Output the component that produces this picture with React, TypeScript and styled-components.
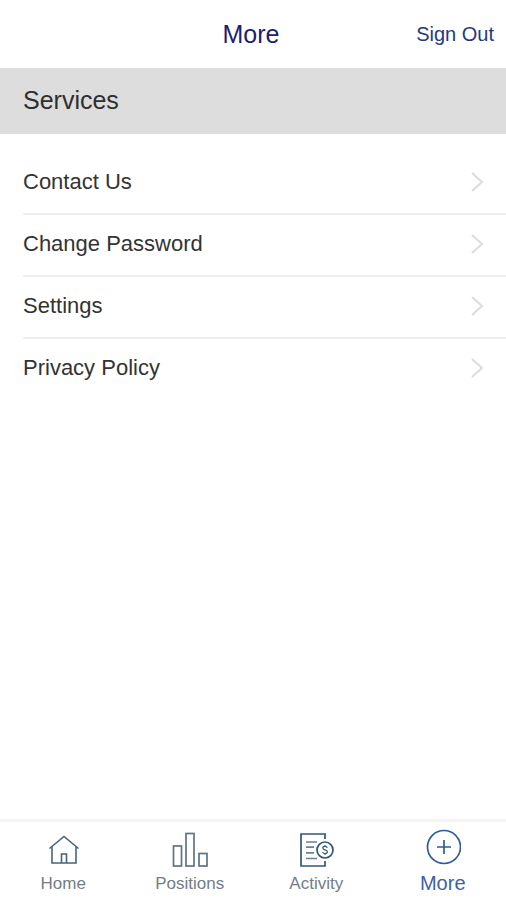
import React from 'react';
import styled, { createGlobalStyle } from 'styled-components';

const GlobalStyle = createGlobalStyle`
  * { box-sizing: border-box; }
  body {
    margin: 0;
    background: #ffffff;
    color: #333333;
    font-family: "Liberation Sans", Arial, sans-serif;
  }
`;

const Screen = styled.div`
  display: flex;
  flex-direction: column;
  min-height: 100vh;
`;

const Header = styled.header`
  display: grid;
  grid-template-columns: 1fr auto 1fr;
  align-items: center;
  height: 68px;
  padding: 0 12px 0 8px;
`;

const Title = styled.h1`
  grid-column: 2;
  margin: 0;
  color: #1b2172;
  font-size: 25px;
  font-weight: 400;
  line-height: 32px;
`;

const SignOut = styled.button`
  justify-self: end;
  padding: 0;
  border: 0;
  background: none;
  color: #1f3a80;
  font: inherit;
  font-size: 20px;
  line-height: 32px;
  cursor: pointer;
`;

const SectionTitle = styled.h2`
  display: flex;
  align-items: center;
  height: 66px;
  margin: 0;
  padding: 0 23px 2px;
  background: #dddddd;
  color: #2e2e2e;
  font-size: 25px;
  font-weight: 400;
`;

const Main = styled.main`
  flex: 1;
`;

const List = styled.ul`
  margin: 0;
  padding: 19px 0 0 23px;
  list-style: none;
`;

const Item = styled.li`
  height: 62px;
  border-bottom: 2px solid #eeeeee;

  &:last-child {
    border-bottom-color: transparent;
  }
`;

const ItemLink = styled.a`
  display: flex;
  align-items: center;
  justify-content: space-between;
  height: 100%;
  padding: 0 22px 2px 0;
  color: #333333;
  font-size: 22px;
  text-decoration: none;
`;

const TabBar = styled.nav`
  display: grid;
  grid-template-columns: repeat(4, 1fr);
  height: 81px;
  border-top: 3px solid #f4f4f4;
`;

const Tab = styled.a<{ $active?: boolean }>`
  display: flex;
  flex-direction: column;
  align-items: center;
  gap: ${(p) => (p.$active ? 6 : 4)}px;
  padding-top: ${(p) => (p.$active ? 7 : 10)}px;
  color: ${(p) => (p.$active ? '#3c62a4' : '#727d88')};
  font-size: ${(p) => (p.$active ? 20 : 17)}px;
  line-height: 24px;
  text-decoration: none;
`;

const Chevron = () => (
  <svg width="14" height="20" viewBox="0 0 14 20" fill="none" stroke="#dcdcdc" strokeWidth="2" aria-hidden="true">
    <path d="M2 1 L12 10 L2 19" />
  </svg>
);

const HomeIcon = () => (
  <svg width="36" height="36" viewBox="0 0 36 36" fill="none" stroke="#46647c" strokeWidth="1.6" aria-hidden="true">
    <path d="M4.5 16.5 L19 4.5 L33.5 16.5" />
    <path d="M7 15 V31 H31 V15" />
    <path d="M16.5 31 V22 H21.5 V31" />
  </svg>
);

const PositionsIcon = () => (
  <svg width="36" height="36" viewBox="0 0 36 36" fill="none" stroke="#5d7388" strokeWidth="1.7" aria-hidden="true">
    <rect x="1.5" y="14" width="8" height="20" />
    <rect x="14" y="1.5" width="8" height="32.5" />
    <rect x="27" y="21.5" width="8" height="12.5" />
  </svg>
);

const ActivityIcon = () => (
  <svg width="36" height="36" viewBox="0 0 36 36" fill="none" stroke="#2f5874" strokeWidth="1.7" aria-hidden="true">
    <path d="M27 7 V2 H3 V34 H27 V29" />
    <path d="M8 10 H19 M8 15.2 H16 M8 20.8 H16 M8 26.5 H19" stroke="#6e8090" />
    <circle cx="27" cy="18" r="8" />
    <path
      d="M29.3 15.8 C29 14.8 28.2 14.4 27 14.4 C25.7 14.4 24.8 15.1 24.8 16.1 C24.8 18.5 29.4 17.3 29.4 19.8 C29.4 20.9 28.4 21.6 27 21.6 C25.7 21.6 24.8 21 24.6 20 M27 13 V14.4 M27 21.6 V23"
      strokeWidth="1.2"
    />
  </svg>
);

const MoreIcon = () => (
  <svg width="36" height="36" viewBox="0 0 36 36" fill="none" stroke="#2f5b9e" strokeWidth="1.7" aria-hidden="true">
    <circle cx="19" cy="18" r="16.5" />
    <path d="M12 18 H26 M19 11 V25" />
  </svg>
);

const services = ['Contact Us', 'Change Password', 'Settings', 'Privacy Policy'];

const tabs = [
  { label: 'Home', Icon: HomeIcon },
  { label: 'Positions', Icon: PositionsIcon },
  { label: 'Activity', Icon: ActivityIcon },
  { label: 'More', Icon: MoreIcon, active: true },
];

export default function App() {
  return (
    <Screen>
      <GlobalStyle />
      <Header>
        <Title>More</Title>
        <SignOut type="button">Sign Out</SignOut>
      </Header>
      <Main>
        <SectionTitle>Services</SectionTitle>
        <List>
          {services.map((name) => (
            <Item key={name}>
              <ItemLink href="#">
                {name}
                <Chevron />
              </ItemLink>
            </Item>
          ))}
        </List>
      </Main>
      <TabBar>
        {tabs.map(({ label, Icon, active }) => (
          <Tab key={label} href="#" $active={active} aria-current={active ? 'page' : undefined}>
            <Icon />
            {label}
          </Tab>
        ))}
      </TabBar>
    </Screen>
  );
}
